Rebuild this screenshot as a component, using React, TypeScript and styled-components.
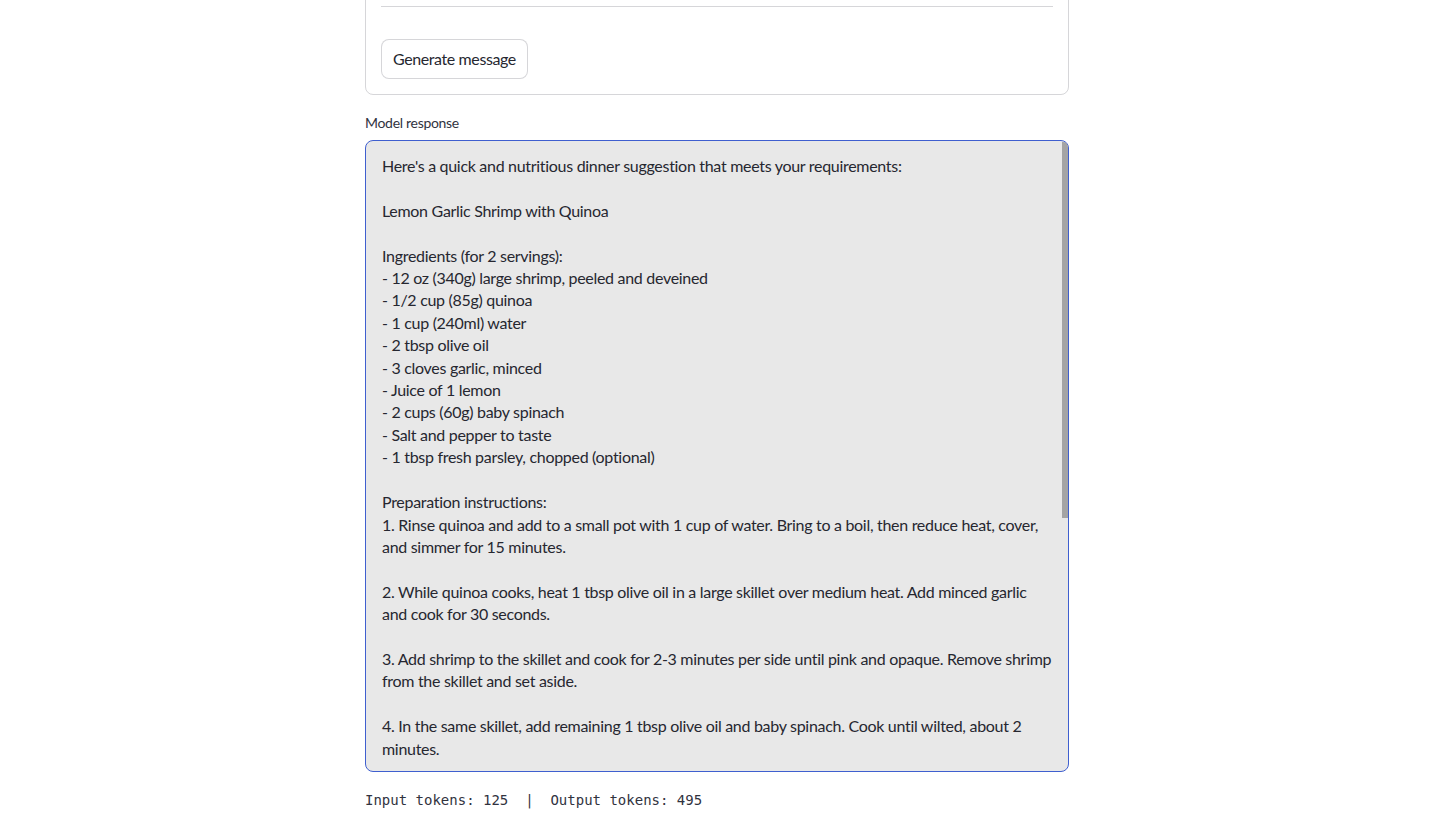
import styled, { createGlobalStyle } from "styled-components";

const GlobalStyle = createGlobalStyle`
  html, body {
    margin: 0;
    padding: 0;
    background: #ffffff;
    overflow: hidden;
  }
  body {
    font-family: Lato, "Noto Sans", sans-serif;
    color: #31333f;
  }
`;

const Viewport = styled.div`
  width: calc(100% - 6px);
  height: 840px;
  overflow: hidden;
`;

const Page = styled.main`
  width: 704px;
  margin: 0 auto;
  display: flex;
  flex-direction: column;
`;

// form card, scrolled so only its bottom shows
const FormCard = styled.div`
  margin-top: -40px;
  border: 1px solid rgba(49, 51, 63, 0.2);
  border-radius: 8px;
  padding: 0 15px 15px;
  display: flex;
  flex-direction: column;
`;

const Divider = styled.hr`
  margin: 45px 0 32px;
  border: none;
  border-top: 1px solid rgba(49, 51, 63, 0.2);
`;

const Button = styled.button`
  align-self: flex-start;
  height: 40px;
  padding: 0 11px 1px;
  background: #ffffff;
  border: 1px solid rgba(49, 51, 63, 0.2);
  border-radius: 8px;
  font-family: Lato, "Noto Sans", sans-serif;
  font-size: 16px;
  letter-spacing: -0.4px;
  color: #262730;
  cursor: pointer;
`;

const Field = styled.div`
  margin-top: 16px;
  display: flex;
  flex-direction: column;
`;

const Label = styled.label`
  font-size: 14px;
  line-height: 24px;
  height: 24px;
  margin-bottom: 5px;
  letter-spacing: -0.3px;
  color: #31333f;
`;

const AreaWrap = styled.div`
  position: relative;
  width: 704px;
  height: 632px;
`;

const Area = styled.textarea`
  box-sizing: border-box;
  display: block;
  width: 100%;
  height: 100%;
  resize: none;
  margin: 0;
  padding: 14px 16px 16px;
  border: 1px solid #3f5fcf;
  border-radius: 8px;
  background: #e8e8e8;
  color: #262730;
  font-family: Lato, "Noto Sans", sans-serif;
  font-size: 16px;
  line-height: 22.4px;
  letter-spacing: -0.3px;
  white-space: pre;
  overflow: hidden;
  outline: none;
`;

// scrollbar thumb (headless hides native scrollbars)
const Thumb = styled.div`
  position: absolute;
  top: 2px;
  right: 1px;
  width: 6px;
  height: 376px;
  background: #a4a4a4;
  border-top-right-radius: 5px;
`;

const Tokens = styled.div`
  margin-top: 18px;
  font-family: "DejaVu Sans Mono", "Liberation Mono", monospace;
  font-size: 14px;
  line-height: 20px;
  color: #31333f;
  white-space: pre;
`;

const response = `Here's a quick and nutritious dinner suggestion that meets your requirements:

Lemon Garlic Shrimp with Quinoa

Ingredients (for 2 servings):
- 12 oz (340g) large shrimp, peeled and deveined
- 1/2 cup (85g) quinoa
- 1 cup (240ml) water
- 2 tbsp olive oil
- 3 cloves garlic, minced
- Juice of 1 lemon
- 2 cups (60g) baby spinach
- Salt and pepper to taste
- 1 tbsp fresh parsley, chopped (optional)

Preparation instructions:
1. Rinse quinoa and add to a small pot with 1 cup of water. Bring to a boil, then reduce heat, cover,
and simmer for 15 minutes.

2. While quinoa cooks, heat 1 tbsp olive oil in a large skillet over medium heat. Add minced garlic
and cook for 30 seconds.

3. Add shrimp to the skillet and cook for 2-3 minutes per side until pink and opaque. Remove shrimp
from the skillet and set aside.

4. In the same skillet, add remaining 1 tbsp olive oil and baby spinach. Cook until wilted, about 2
minutes.

5. Return shrimp to the skillet, add lemon juice, and season with salt and pepper. Toss to
combine.

6. Fluff quinoa with a fork and divide between two plates. Top with the shrimp and spinach
mixture and garnish with parsley.

Nutritional information (per serving):
- Calories: 380
- Protein: 38g
- Carbohydrates: 28g
- Fat: 13g`;

export default function App() {
  return (
    <>
      <GlobalStyle />
      <Viewport>
        <Page>
          <FormCard>
            <Divider />
            <Button type="button">Generate message</Button>
          </FormCard>
          <Field>
            <Label>Model response</Label>
            <AreaWrap>
              <Area readOnly wrap="off" value={response} />
              <Thumb />
            </AreaWrap>
          </Field>
          <Tokens>{"Input tokens: 125  |  Output tokens: 495"}</Tokens>
        </Page>
      </Viewport>
    </>
  );
}
